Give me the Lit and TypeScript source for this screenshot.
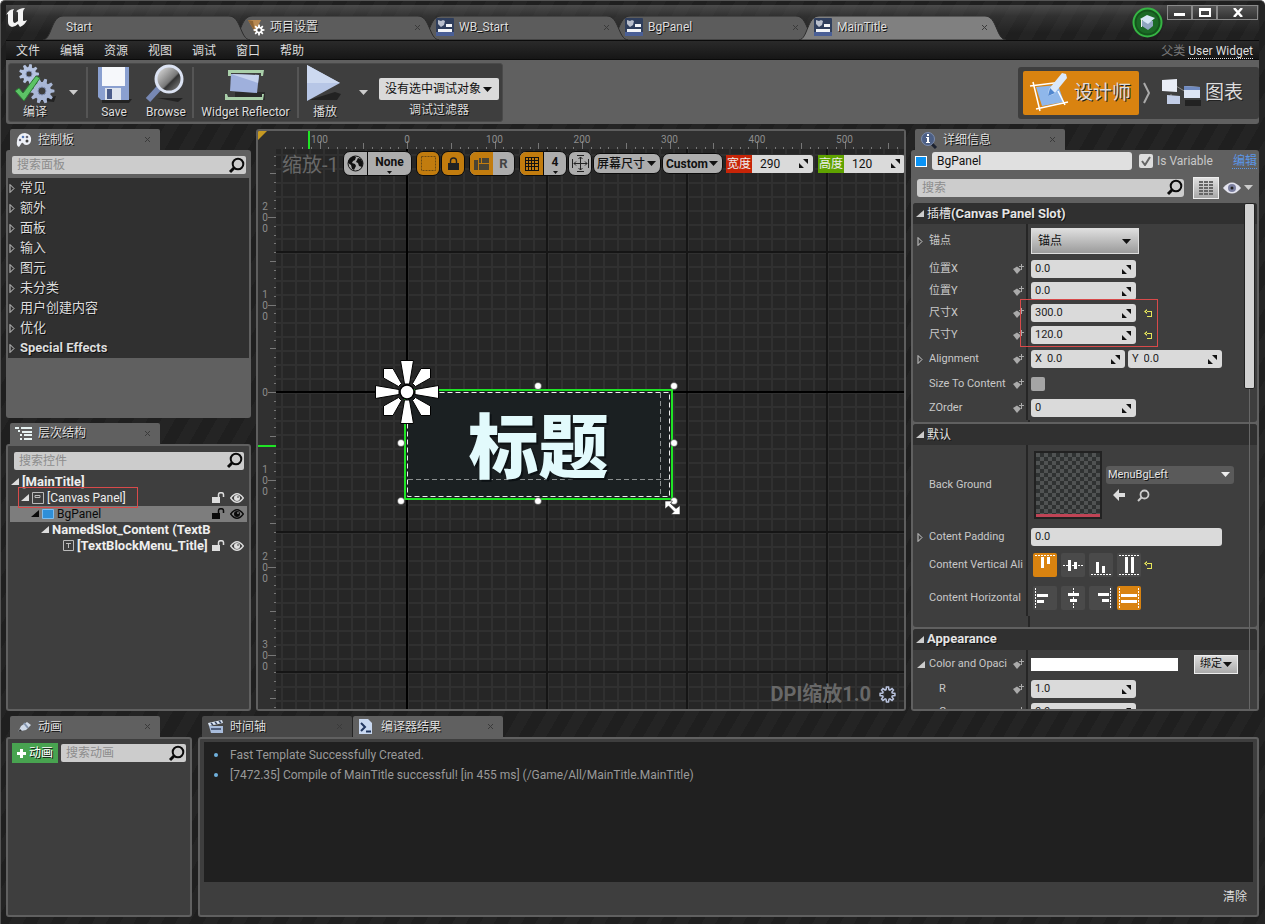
import { LitElement, html, svg, css, nothing } from "lit";
import { customElement, state } from "lit/decorators.js";
import { classMap } from "lit/directives/class-map.js";

const dragGlyph = html`<svg class="drag" width="9" height="9" viewBox="0 0 9 9" aria-hidden="true"><path d="M4 0h5v5zM0 4v5h5z" fill="#111"/></svg>`;
const lens = html`<svg width="18" height="17" viewBox="0 0 18 17" aria-hidden="true"><circle cx="10" cy="7" r="5.3" fill="none" stroke="#0a0a0a" stroke-width="2"/><path d="M6.2 10.8 2 15" stroke="#0a0a0a" stroke-width="3"/></svg>`;
const cross = html`<svg width="7" height="7" viewBox="0 0 7 7" aria-hidden="true"><path d="M1 1l5 5M6 1L1 6" stroke="#3a3a3a"/></svg>`;
const caret = html`<svg width="9" height="5" viewBox="0 0 9 5" aria-hidden="true"><path d="M0 0h9L4.500 5z" fill="#ccc"/></svg>`;
const closedArrow = html`<svg width="6" height="9" viewBox="0 0 6 9" aria-hidden="true"><path d="M1 .5v8l4-4z" fill="none" stroke="#ccc"/></svg>`;
const openArrow = (c: string) => html`<svg width="8" height="7" viewBox="0 0 8 7" aria-hidden="true"><path d="M8 0v7H0z" fill=${c}/></svg>`;
const bindIcon = html`<svg width="12" height="10" viewBox="0 0 12 10" aria-hidden="true"><path d="M1 5l4-2.500 4 3L5 10z" fill="#aaa"/><path d="M9.500 0v6M7 2.500h5" stroke="#aaa"/></svg>`;
const resetIcon = html`<svg width="9" height="8" viewBox="0 0 9 8" aria-hidden="true"><path d="M3 0L0 2.500 3 5zM2 2h6v6H3V7h4V3H2z" fill="#e6e45a"/></svg>`;
const widgetIcon = html`<svg width="18" height="18" viewBox="0 0 18 18" aria-hidden="true"><rect width="18" height="18" rx="1" fill="#2f3e5c"/><path d="M0 14h18v4H0z" fill="#4a5f96"/><path d="M2 2l3 1 2-1 2 1-1 4-3 2-3-3z" fill="#b9bfcc"/><path d="M10 6h6v3h-6zM2 11h14v3H2z" fill="#f3f5f8"/></svg>`;
const lockIcon = (c: string) => html`<svg width="13" height="11" viewBox="0 0 13 11" aria-hidden="true"><rect y="5" width="8" height="6" fill=${c}/><path d="M6.500 5V2.500C6.500 0 11.500 0 11.500 2.500V5" fill="none" stroke=${c} stroke-width="1.500"/></svg>`;
const eyeIcon = (c: string) => html`<svg width="14" height="10" viewBox="0 0 14 10" aria-hidden="true"><path d="M.7 5Q7-3.500 13.300 5 7 13.500.7 5z" fill="none" stroke=${c} stroke-width="1.300"/><circle cx="7" cy="5" r="3" fill=${c}/><circle cx="8" cy="4" r="1" fill="#777"/></svg>`;

/* A gear outline with n teeth, centred on cx,cy. */
function gearPath(cx: number, cy: number, r: number, n: number, tooth: number): string {
  const pts: string[] = [];
  for (let i = 0; i < n; i++) {
    const a = (i / n) * Math.PI * 2;
    const s = Math.PI / n;
    for (const [off, rad] of [[-0.75, r], [-0.35, r + tooth], [0.35, r + tooth], [0.75, r]]) {
      pts.push(`${(cx + Math.cos(a + off * s) * rad).toFixed(2)} ${(cy + Math.sin(a + off * s) * rad).toFixed(2)}`);
    }
  }
  return `M${pts.join("L")}z`;
}

const base = css`
  * { box-sizing: border-box; }
  svg { display: block; flex: none; }
  button, input, select { font: inherit; color: inherit; margin: 0; border: 0; background: none; padding: 0; min-width: 0; }
  button { cursor: pointer; }
  select { appearance: none; }
  a { color: inherit; }
`;

const ORIGIN_X = 149;
const ORIGIN_Y = 261;
const RULER = 18;
const UNIT = 87.5;

@customElement("design-surface")
export class DesignSurface extends LitElement {
  static styles = [base, css`
    :host { display: block; position: relative; flex: 1; min-width: 0; overflow: hidden; border: 2px solid #5e5e5e; border-radius: 3px; background: #262626; }
    .grid { position: absolute; inset: 0; width: 100%; height: 100%; }
    .num { font: 10px Roboto, "Liberation Sans", sans-serif; fill: #8c8c8c; text-anchor: middle; }
    .zoom, .dpi { position: absolute; color: #686868; font: 20px/24px Roboto, "Noto Sans CJK SC", sans-serif; white-space: nowrap; }
    .zoom { left: 24px; top: 22px; }
    .dpi { right: 8px; bottom: 3px; display: flex; align-items: center; gap: 8px; font-weight: 700; }
    .caption { position: absolute; left: 149px; top: 261px; width: 263px; height: 101px; display: flex; justify-content: center; align-items: center; font: 900 70px/101px "Noto Sans CJK SC", sans-serif; color: #e2fafc; text-shadow: 2px 2px 0 #0c1114; }
    .tools { position: absolute; left: 85px; top: 20px; display: flex; align-items: center; gap: 1px; color: #111; font: 700 12px/16px Roboto, "Noto Sans CJK SC", sans-serif; white-space: nowrap; }
    .group { display: flex; flex: none; border: 1px solid #0c0c0c; border-radius: 7px; overflow: hidden; height: 25px; background: #adadad; }
    .group.low { height: 21px; }
    .gap { margin-left: 3px; }
    .group > button { display: flex; flex: none; flex-direction: column; align-items: center; justify-content: center; width: 22px; gap: 1px; }
    .pair > button { width: 23px; }
    .group > button + button { border-left: 1px solid #0c0c0c; }
    .group > .wide { width: 44px; }
    .on { background: #c27c0e; }
    .group > .rtl { width: 21px; color: #444; font-size: 13px; border-left: 0; }
    .pick { position: relative; display: flex; align-items: center; }
    .pick select { height: 19px; padding: 0 14px 0 3px; border-radius: 6px; font-weight: 500; }
    .pick.bold select { font-weight: 700; }
    .pick svg { position: absolute; right: 4px; pointer-events: none; }
    .dim { display: flex; flex: none; align-items: center; height: 18px; margin-left: 2px; color: #eee; font-weight: 400; }
    .dim.h { margin-left: 4px; }
    .dim label { height: 18px; padding: 0 1px; line-height: 18px; background: #c72407; }
    .dim.h label { background: #5fa300; }
    .box { display: flex; align-items: center; width: 61px; height: 18px; padding: 0 5px 0 8px; background: #dadada; color: #111; border-radius: 0 3px 3px 0; }
    .box input { flex: 1; width: 0; }
  `];

  @state() private w = 646;
  @state() private h = 578;

  private watcher = new ResizeObserver(([e]) => {
    this.w = e.contentRect.width;
    this.h = e.contentRect.height;
  });

  connectedCallback() {
    super.connectedCallback();
    this.watcher.observe(this);
  }

  disconnectedCallback() {
    this.watcher.disconnect();
    super.disconnectedCallback();
  }

  private ticks() {
    const out = [];
    const tick = (i: number) => (i % 10 === 0 ? 8 : i % 5 === 0 ? 6 : 2);
    for (let i = -14; ORIGIN_X + (i * UNIT) / 10 < this.w; i++) {
      const x = Math.round(ORIGIN_X + (i * UNIT) / 10) + 0.5;
      out.push(svg`<path d="M${x} ${RULER - tick(i)}V${RULER}" stroke="#777"/>`);
    }
    for (let i = -27; ORIGIN_Y + (i * UNIT) / 10 < this.h; i++) {
      const y = Math.round(ORIGIN_Y + (i * UNIT) / 10) + 0.5;
      out.push(svg`<path d="M${RULER - tick(i)} ${y}H${RULER}" stroke="#777"/>`);
    }
    for (let i = -1; ORIGIN_X + i * UNIT + 12 < this.w; i++) {
      out.push(svg`<text class="num" x=${ORIGIN_X + i * UNIT} y="12">${Math.abs(i * 100)}</text>`);
    }
    for (let i = -2; ORIGIN_Y + i * UNIT + 18 < this.h; i++) {
      const chars = String(Math.abs(i * 100)).split("");
      chars.forEach((c, k) => out.push(svg`<text class="num" x="7" y=${ORIGIN_Y + 4 + i * UNIT + (k - (chars.length - 1) / 2) * 11}>${c}</text>`));
    }
    return out;
  }

  render() {
    const knobs = [[280, 255], [416, 255], [143, 312], [416, 312], [143, 370], [280, 370], [416, 370]];
    return html`
      <svg class="grid" aria-hidden="true">
        <defs>
          <pattern id="minor" x=${ORIGIN_X} y=${ORIGIN_Y} width="14" height="14" patternUnits="userSpaceOnUse"><path d="M0 0h14v2H2v12H0z" fill="#303030"/></pattern>
          <pattern id="major" x=${ORIGIN_X - 1} y=${ORIGIN_Y - 1} width="140" height="140" patternUnits="userSpaceOnUse"><path d="M0 0h140v2H2v138H0z" fill="#151515"/></pattern>
        </defs>
        <rect width="100%" height="100%" fill="#262626"/>
        <rect width="100%" height="100%" fill="url(#minor)"/>
        <rect width="100%" height="100%" fill="url(#major)"/>
        <path d="M148 0h2v4000h-2zM0 260h4000v2H0z" fill="#000"/>
        <rect width="100%" height=${RULER} fill="#303030"/>
        <rect width=${RULER} height="100%" fill="#303030"/>
        ${this.ticks()}
        <path d="M51 0V18M0 315H18" stroke="#1fe425" stroke-width="2"/>
        <path d="M0 0h9L0 9z" fill="#c79a22"/>
        <rect x="147" y="259" width="267" height="109" fill="#1b2022" stroke="#1fe425" stroke-width="2"/>
        <g fill="none" stroke-dasharray="5 3">
          <rect x="149.500" y="261.500" width="262" height="104" stroke="#eee"/>
          <path d="M402.500 262v103M150 348.500h262" stroke="#8b8f90"/>
        </g>
        ${knobs.map(([x, y]) => svg`<circle cx=${x} cy=${y} r="3.500" fill="#fff" stroke="#222" stroke-width=".5"/>`)}
        <g transform="translate(149 261)" fill="#fff" stroke="#000">
          ${[0, 90, 180, 270].map((a) => svg`<g transform="rotate(${a})"><path d="M-2.500-8L-6.500-31.500H6.500L2.500-8z"/><path d="M5.500-8.500L14-23.500H23.500V-14L8.500-5.500z"/></g>`)}
          <circle r="7" stroke-width="1.500"/>
        </g>
        <path d="M407 370h7.500l-2 2.500 5.500 5 4-3v9h-9l3-3-5.500-5.500-3.500 3z" fill="#fff" stroke="#222" stroke-width=".6"/>
      </svg>
      <div class="caption">标题</div>
      <div class="zoom">缩放-1</div>
      <div class="tools">
        <div class="group pair">
          <button aria-label="Localization"><svg width="17" height="17" viewBox="0 0 17 17"><circle cx="8.500" cy="8.500" r="7.500" fill="none" stroke="#111"/><path d="M3 3l4-2 2 1-1 3-2 1-1 2 3 1 1 2-2 4-2-1-1-4-3-2V6zM11 3l3 1 2 4-1 4-3-1-1-3-2-1 1-2z" fill="#111"/></svg></button>
          <button class="wide">None<svg width="5" height="3" viewBox="0 0 5 3"><path d="M0 0h5L2.500 3z" fill="#111"/></svg></button>
        </div>
        <div class="group gap"><button class="on" aria-label="Outline"><svg width="17" height="17" viewBox="0 0 17 17"><path d="M1.500 1.500h14v14h-14z" fill="none" stroke="#6d4a12" stroke-dasharray="2 1"/></svg></button></div>
        <div class="group"><button class="on" aria-label="Lock"><svg width="11" height="13" viewBox="0 0 11 13"><path d="M0 6h11v7H0z" fill="#222"/><path d="M2.500 6V4C2.500 0 8.500 0 8.500 4v2" fill="none" stroke="#222" stroke-width="1.400"/></svg></button></div>
        <div class="group pair gap">
          <button class="on" aria-label="Flow"><svg width="15" height="12" viewBox="0 0 15 12"><path d="M0 2h4v10H0zM5 0h2v5H5zM8 0h7v5H8zM5 6h10v6H5z" fill="#4a4435"/></svg></button>
          <button class="rtl">R</button>
        </div>
        <div class="group pair gap">
          <button class="on" aria-label="Grid snap"><svg width="14" height="14" viewBox="0 0 14 14"><path d="M.5 0v14M3.500 0v14M6.500 0v14M9.500 0v14M13.500 0v14M0 .5h14M0 3.500h14M0 6.500h14M0 9.500h14M0 13.500h14" stroke="#111"/></svg></button>
          <button>4<svg width="5" height="3" viewBox="0 0 5 3"><path d="M0 0h5L2.500 3z" fill="#111"/></svg></button>
        </div>
        <div class="group"><button aria-label="Zoom to fit"><svg width="17" height="17" viewBox="0 0 17 17" fill="none" stroke="#222"><path d="M.5 4v9M16.500 4v9M5 .5h7M5 16.500h7M2 8.500h13M8.500 2v13M4 6.500l-2 2 2 2M13 6.500l2 2-2 2M6.500 4l2-2 2 2M6.500 13l2 2 2-2"/></svg></button></div>
        <div class="group low pick"><select aria-label="屏幕尺寸"><option>屏幕尺寸</option></select><svg width="9" height="5" viewBox="0 0 9 5"><path d="M0 0h9L4.500 5z" fill="#111"/></svg></div>
        <div class="group low pick bold"><select aria-label="Size rule"><option>Custom</option></select><svg width="9" height="5" viewBox="0 0 9 5"><path d="M0 0h9L4.500 5z" fill="#111"/></svg></div>
        <div class="dim"><label for="w">宽度</label><span class="box"><input id="w" value="290" size="3">${dragGlyph}</span></div>
        <div class="dim h"><label for="h">高度</label><span class="box"><input id="h" value="120" size="3">${dragGlyph}</span></div>
      </div>
      <div class="dpi">DPI缩放1.0<svg width="17" height="17" viewBox="0 0 17 17"><path d=${gearPath(8.5, 8.5, 5, 8, 2.5)} fill="none" stroke="#b9c3de" stroke-width="1.500"/></svg></div>
    `;
  }
}

type RowOpts = { arrow?: unknown; bind?: boolean; cls?: string; forId?: string; indent?: boolean };

@customElement("details-panel")
export class DetailsPanel extends LitElement {
  static styles = [base, css`
    :host { display: flex; flex-direction: column; flex: 1; min-height: 0; background: #606060; border-radius: 3px; padding: 1px 2px 2px; overflow: hidden; color: #c8c8c8; font: 11px/16px Roboto, "Noto Sans CJK SC", sans-serif; }
    .name { display: flex; align-items: center; gap: 5px; height: 20px; padding-left: 2px; font-size: 12px; }
    .swatch { width: 12px; height: 11px; border: 1px solid #fff; background: #0a93f5; }
    .name > input { width: 200px; height: 18px; padding: 0 5px; border-radius: 3px; background: #e0e0e0; color: #111; }
    .check { display: flex; align-items: center; gap: 4px; margin-left: 2px; white-space: nowrap; }
    .check input, .tick { appearance: none; width: 14px; height: 14px; border-radius: 2px; background: #a5a5a5; }
    .check input { background: #ddd; }
    .check span { position: relative; display: flex; }
    .check svg { position: absolute; left: 2px; top: 2px; pointer-events: none; }
    .edit { margin-left: auto; color: #5b96e6; text-decoration: underline dotted; white-space: nowrap; text-underline-offset: 3px; }
    .find { display: flex; align-items: center; height: 32px; padding: 1px 4px 0; gap: 9px; }
    .search { display: flex; align-items: center; flex: 1; height: 18px; padding-left: 5px; background: #ccc; border-radius: 3px; font-size: 12px; }
    .search input { flex: 1; color: #111; }
    .search input::placeholder { color: #8d8d8d; opacity: 1; }
    .matrix { display: flex; align-items: center; justify-content: center; width: 26px; height: 22px; background: linear-gradient(#e0e0e0, #a8a8a8); border: 1px solid #eee; }
    .view { display: flex; align-items: center; gap: 3px; margin-left: -5px; }
    .scroll { position: relative; flex: 1; min-height: 0; overflow: hidden; }
    .thumb { position: absolute; right: 2px; top: 0; width: 11px; height: 186px; background: #d2d2d2; border: 1px solid #222; border-radius: 2px; }
    .track { position: absolute; right: 7px; top: 186px; bottom: 0; width: 1px; background: #666; }
    .cat { background: #3e3e3e; border-radius: 3px; margin-bottom: 2px; overflow: hidden; }
    .cat h3 { display: flex; align-items: center; gap: 3px; margin: 0; height: 21px; padding: 0 0 1px 3px; background: #303030; color: #e4e4e4; font: 700 13px/16px Roboto, "Noto Sans CJK SC", sans-serif; text-shadow: 1px 1px 0 #111; }
    .cat h3.cjk { font: 400 12px/16px "Noto Sans CJK SC", sans-serif; }
    .cat h3 b { font: 700 13px/16px Roboto, sans-serif; }
    .row { display: flex; height: 22px; }
    .r24 { height: 24px; }
    .r26 { height: 26px; }
    .r28 { height: 28px; }
    .r30 { height: 30px; }
    .r34 { height: 34px; }
    .r36 { height: 36px; }
    .r78 { height: 79px; }
    .lab { display: flex; align-items: center; width: 115px; padding: 0 2px 0 4px; border-right: 2px solid #262626; white-space: nowrap; }
    .arr { width: 12px; }
    .lab label, .lab .txt { flex: 1; min-width: 0; overflow: hidden; }
    .ind .arr { width: 22px; }
    .val { display: flex; align-items: center; flex: 1; padding-left: 3px; gap: 3px; }
    .spin { display: flex; align-items: center; width: 105px; height: 18px; padding: 0 5px 0 4px; gap: 5px; border-radius: 3px; background: #dadada; color: #222; }
    .spin input { flex: 1; }
    .spin.s { width: 94px; }
    .spin.l { width: 191px; }
    .reset { margin-left: 5px; }
    .sizes { position: relative; }
    .mark { position: absolute; left: 107px; top: -3px; width: 138px; height: 48px; border: 1px solid #d84a4a; }
    .anchor { position: relative; display: flex; align-items: center; width: 108px; height: 26px; background: linear-gradient(#dedede, #9b9b9b); border: 1px solid #ddd; color: #111; font-size: 12px; }
    .anchor select { flex: 1; height: 24px; padding: 0 6px; }
    .anchor svg { position: absolute; right: 7px; pointer-events: none; }
    .thumbnail { width: 68px; height: 68px; margin-left: 3px; border: 2px solid #222; background: linear-gradient(#c04455, #c04455) bottom / 100% 3px no-repeat, repeating-conic-gradient(#2f3232 0 25%, #505353 0 50%) 0 0 / 8px 8px; }
    .asset { display: flex; flex-direction: column; gap: 5px; padding-bottom: 2px; }
    .combo { position: relative; display: flex; align-items: center; width: 128px; height: 18px; margin-left: 1px; background: #5a5a5a; border-radius: 3px; color: #e4e4e4; text-shadow: 1px 1px 0 #111; }
    .combo select { flex: 1; padding-left: 2px; height: 18px; text-shadow: inherit; }
    .combo svg { position: absolute; right: 4px; pointer-events: none; }
    .acts { display: flex; gap: 12px; padding-left: 8px; }
    .aligns { display: flex; align-items: center; gap: 4px; padding-left: 2px; }
    .al { display: flex; align-items: center; justify-content: center; width: 24px; height: 24px; background: #4a4a4a; border-radius: 2px; }
    .al.on { background: #d98310; }
    .aligns ~ .reset { margin-left: 0; }
    .white { width: 147px; height: 13px; background: #fff; }
    .bindb { display: flex; align-items: center; gap: 1px; height: 19px; margin-left: 13px; padding: 0 5px; background: linear-gradient(#ddd, #aaa); border: 1px solid #eee; color: #111; white-space: nowrap; }
    .foot { height: 11px; display: flex; }
    .foot::before { content: ""; width: 115px; border-right: 2px solid #262626; }
    .foot.one { height: 2px; }
  `];

  private row(label: string, body: unknown, o: RowOpts = {}) {
    return html`<div class="row ${o.cls ?? ""} ${o.indent ? "ind" : ""}">
      <div class="lab"><span class="arr">${o.arrow ?? nothing}</span>${o.forId ? html`<label for=${o.forId}>${label}</label>` : html`<span class="txt">${label}</span>`}${o.bind ? bindIcon : nothing}</div>
      <div class="val">${body}</div></div>`;
  }

  private spin(id: string, value: string, cls = "", prefix = "", drag = true) {
    return html`<span class="spin ${cls}">${prefix ? html`<span>${prefix}</span>` : nothing}<input id=${id} aria-label=${id} .value=${value}>${drag ? dragGlyph : nothing}</span>`;
  }

  /* Four alignment buttons; the picture is drawn for the vertical axis and turned for the horizontal. */
  private aligns(active: number, horizontal: boolean) {
    const art = [
      svg`<path d="M1 1.500h20" stroke-dasharray="2 1"/><path d="M7 3h3v11H7zM13 3h3v7h-3z" fill="#fff" stroke="none"/>`,
      svg`<path d="M1 11.500h20" stroke-dasharray="2 1"/><path d="M6 6h3v11H6zM12 8h3v7h-3z" fill="#fff" stroke="none"/>`,
      svg`<path d="M1 20.500h20" stroke-dasharray="2 1"/><path d="M6 8h3v11H6zM12 12h3v7h-3z" fill="#fff" stroke="none"/>`,
      svg`<path d="M1 1.500h20M1 20.500h20" stroke-dasharray="2 1"/><path d="M7 3h3v16H7zM13 3h3v16h-3z" fill="#fff" stroke="none"/>`,
    ];
    return html`<span class="aligns">${art.map((a, i) => html`<button class="al ${i === active ? "on" : ""}" aria-label="Align ${i + 1}"><svg width="22" height="22" viewBox="0 0 22 22"><g stroke="#fff" fill="none" transform=${horizontal ? "matrix(0 1 1 0 0 0)" : "translate(0 0)"}>${a}</g></svg></button>`)}</span>`;
  }

  render() {
    const open = openArrow("#ccc");
    return html`
      <div class="name">
        <span class="swatch"></span>
        <input aria-label="Name" value="BgPanel">
        <label class="check"><span><input type="checkbox" checked><svg width="10" height="10" viewBox="0 0 10 10"><path d="M1 5l3 4 5-8" fill="none" stroke="#666" stroke-width="2"/></svg></span>Is Variable</label>
        <a class="edit" href="#edit">编辑</a>
      </div>
      <div class="find">
        <span class="search"><input aria-label="搜索" placeholder="搜索">${lens}</span>
        <button class="matrix" aria-label="Property matrix"><svg width="14" height="14" viewBox="0 0 14 14"><path d="M0 1h14M0 4h14M0 7h14M0 10h14M0 13h14" stroke="#666" stroke-width="2" stroke-dasharray="4 1"/></svg></button>
        <button class="view" aria-label="View options"><svg width="18" height="12" viewBox="0 0 18 12"><path d="M0 6Q9-5 18 6 9 17 0 6z" fill="#e3e3ee"/><circle cx="9" cy="6" r="4" fill="#7b7fa0"/><circle cx="9" cy="6" r="1.500" fill="#222"/></svg>${caret}</button>
      </div>
      <div class="scroll">
        <section class="cat">
          <h3 class="cjk">${open}<span>插槽<b>(Canvas Panel Slot)</b></span></h3>
          ${this.row("锚点", html`<span class="anchor"><select id="anchor"><option>锚点</option></select><svg width="9" height="5" viewBox="0 0 9 5"><path d="M0 0h9L4.500 5z" fill="#111"/></svg></span>`, { arrow: closedArrow, cls: "r34", forId: "anchor" })}
          ${this.row("位置X", this.spin("posx", "0.0"), { bind: true, forId: "posx" })}
          ${this.row("位置Y", this.spin("posy", "0.0"), { bind: true, forId: "posy" })}
          <div class="sizes">
            ${this.row("尺寸X", html`${this.spin("sizex", "300.0")}<span class="reset">${resetIcon}</span>`, { bind: true, forId: "sizex" })}
            ${this.row("尺寸Y", html`${this.spin("sizey", "120.0")}<span class="reset">${resetIcon}</span>`, { bind: true, forId: "sizey" })}
            <div class="mark"></div>
          </div>
          ${this.row("Alignment", html`${this.spin("alx", "0.0", "s", "X")}${this.spin("aly", "0.0", "s", "Y")}`, { arrow: closedArrow, bind: true, cls: "r26", forId: "alx" })}
          ${this.row("Size To Content", html`<input class="tick" id="stc" type="checkbox">`, { bind: true, cls: "r24", forId: "stc" })}
          ${this.row("ZOrder", this.spin("z", "0"), { bind: true, cls: "r24", forId: "z" })}
          <div class="foot one"></div>
        </section>
        <section class="cat">
          <h3 class="cjk">${open}<span>默认</span></h3>
          ${this.row("Back Ground", html`<div class="thumbnail"></div><div class="asset">
            <span class="combo"><select id="bg"><option>MenuBgLeft</option></select><svg width="9" height="5" viewBox="0 0 9 5"><path d="M0 0h9L4.500 5z" fill="#eee"/></svg></span>
            <span class="acts"><button aria-label="Use selected"><svg width="12" height="12" viewBox="0 0 12 12"><path d="M6 0v4h6v4H6v4L0 6z" fill="#ddd"/></svg></button><button aria-label="Browse"><svg width="13" height="13" viewBox="0 0 13 13"><circle cx="7.500" cy="5.500" r="4" fill="none" stroke="#ccc" stroke-width="1.800"/><path d="M4.500 8.500L1 12" stroke="#ccc" stroke-width="2"/></svg></button></span></div>`, { cls: "r78", forId: "bg" })}
          ${this.row("Cotent Padding", this.spin("pad", "0.0", "l", "", false), { arrow: closedArrow, cls: "r26", forId: "pad" })}
          ${this.row("Content Vertical Ali", html`${this.aligns(0, false)}<span class="reset">${resetIcon}</span>`, { cls: "r30" })}
          ${this.row("Content Horizontal", this.aligns(3, true), { cls: "r36" })}
          <div class="foot"></div>
        </section>
        <section class="cat">
          <h3>${open}<span>Appearance</span></h3>
          ${this.row("Color and Opaci", html`<span class="white"></span><button class="bindb">绑定<svg width="9" height="5" viewBox="0 0 9 5"><path d="M0 0h9L4.500 5z" fill="#111"/></svg></button>`, { arrow: open, bind: true, cls: "r28" })}
          ${this.row("R", this.spin("r", "1.0"), { bind: true, indent: true, forId: "r" })}
          ${this.row("G", this.spin("g", "0.0"), { bind: true, indent: true, cls: "r24", forId: "g" })}
        </section>
        <div class="track"></div><div class="thumb"></div>
      </div>`;
  }
}

@customElement("app-root")
export class AppRoot extends LitElement {
  static styles = [base, css`
    :host { display: block; color: #ddd; font: 12px/16px Roboto, "Noto Sans CJK SC", sans-serif; }
    .win { display: flex; flex-direction: column; height: 100vh; min-height: 700px; padding: 4px 6px 7px 5px; border: solid #555; border-width: 1px 0 0 1px; border-radius: 5px 5px 0 0; background: repeating-linear-gradient(120deg, #1f1f1f 0 12px, #242424 12px 24px); }
    .title { display: flex; height: 35px; background: linear-gradient(#606060aa, #4a4a4a66 11px, #22222200 28px); }
    .logo { width: 37px; padding: 3px 0 0 0; }
    .tabs { display: flex; flex: 1; min-width: 0; padding-top: 11px; }
    .wt { position: relative; isolation: isolate; display: flex; align-items: center; flex: 0 1 207px; min-width: 0; height: 24px; margin-right: -18px; padding: 0 17px 2px 15px; gap: 5px; text-shadow: 1px 1px 0 #111; }
    .wt > * { position: relative; }
    .wt .shape { position: absolute; left: 0; top: 0; width: 100%; height: 100%; z-index: -1; }
    .wt .pic { width: 18px; }
    .wt.plain .pic { width: 3px; }
    .wt .x { margin-left: auto; margin-right: 1px; }
    .winbtns { display: flex; align-items: flex-start; gap: 4px; }
    .academy { margin-top: 2px; }
    .wb { display: flex; margin-right: 1px; }
    .wb button { display: flex; align-items: center; justify-content: center; width: 25px; height: 15px; border: 1px solid #8a8a8a; background: linear-gradient(#555, #333); }
    .wb button:last-child { width: 41px; }
    .menu { display: flex; align-items: center; height: 20px; padding: 1px 6px 0 10px; background: linear-gradient(#2a2a2a, #161616); border: solid #0b0b0b; border-width: 1px 0; }
    .menu nav { display: flex; gap: 20px; }
    .parent { margin-left: auto; color: #777; }
    .parent a { color: #ddd; text-decoration: underline dotted; text-underline-offset: 3px; }
    .bar { display: flex; align-items: flex-start; justify-content: space-between; min-height: 64px; padding: 3px 0 2px 2px; background: #606060; border-radius: 0 0 3px 3px; }
    .tools { display: flex; height: 59px; background: #3e3e3e; border: 1px solid #4a4a4a; border-radius: 3px; text-shadow: 1px 1px 0 #111; }
    .tb { display: flex; flex-direction: column; align-items: center; justify-content: flex-end; width: 52px; height: 57px; padding-bottom: 1px; text-shadow: inherit; white-space: nowrap; }
    .tb.w { width: 103px; }
    .drop { display: flex; align-items: center; justify-content: center; width: 25px; height: 57px; }
    .sep { width: 2px; margin: 3px 0; background: #555; }
    .filter { display: flex; flex-direction: column; align-items: center; padding: 14px 3px 0 0; margin-left: 3px; gap: 2px; }
    .dd { position: relative; display: flex; align-items: center; width: 120px; height: 22px; background: #dadada; color: #111; border-radius: 2px; text-shadow: none; }
    .dd select { flex: 1; height: 22px; padding: 0 12px 0 6px; }
    .dd svg { position: absolute; right: 7px; pointer-events: none; }
    .modes { display: flex; align-items: center; height: 52px; margin-top: 4px; padding: 0 16px 0 5px; background: #3e3e3e; border-radius: 3px; color: #ddd; font-size: 19px; }
    .mode { display: flex; align-items: center; gap: 4px; height: 44px; white-space: nowrap; line-height: 24px; text-shadow: 1px 1px 0 #222; }
    .mode.on { padding: 0 8px 0 5px; background: #d98310; border-radius: 2px; }
    .chev { margin: 0 10px 0 4px; }
    .main { display: flex; flex: 1; min-height: 0; gap: 5px; padding-top: 5px; }
    .left { display: flex; flex-direction: column; width: 245px; gap: 5px; }
    .right { display: flex; flex-direction: column; width: 348px; }
    .dock { display: flex; flex-direction: column; flex: 1; min-height: 0; }
    .ptabs { display: flex; padding-left: 4px; gap: 1px; }
    .pt { display: flex; align-items: center; width: 150px; height: 21px; padding: 0 9px 0 5px; gap: 5px; background: #606060; border-radius: 2px 2px 0 0; color: #ddd; text-shadow: 1px 1px 0 #111; white-space: nowrap; }
    .pt.off { background: #474747; }
    .pt .ic { width: 18px; }
    .pt .x { margin-left: auto; }
    .palette { flex: 1; padding: 6px 2px 2px; background: #606060; border-radius: 3px; }
    .framed { flex: 1; min-height: 0; border: 2px solid #606060; border-radius: 3px; background: #3e3e3e; }
    .search { display: flex; align-items: center; height: 18px; padding-left: 5px; background: #ccc; border-radius: 2px; }
    .search input { flex: 1; width: 0; color: #111; }
    .search input::placeholder { color: #8d8d8d; opacity: 1; }
    .palette .search { margin: 0 3px 0 4px; }
    .list { list-style: none; margin: 4px 0 0; padding: 0; background: #303030; text-shadow: 1px 1px 0 #111; }
    .list li { display: flex; align-items: center; height: 20px; padding-left: 1px; gap: 5px; font-size: 13px; }
    .list li.b { font-weight: 700; }
    .hier { padding: 6px 2px; }
    .hier .search { margin: 0 3px 4px 4px; }
    .node { position: relative; display: flex; align-items: center; height: 16px; padding-right: 3px; color: #eee; white-space: nowrap; }
    .node .in { display: flex; align-items: center; gap: 3px; flex: 1; min-width: 0; }
    .node.bold { font-weight: 700; font-size: 13px; }
    .node.d0 { padding-left: 1px; }
    .node.d1 { padding-left: 11px; }
    .node.d2 { padding-left: 21px; }
    .node.d3 { padding-left: 31px; }
    .node.d4 { padding-left: 53px; }
    .node.sel { background: #7d7d7d; color: #0a0a0a; }
    .node .end { display: flex; align-items: center; gap: 5px; margin-left: 4px; }
    .node .mark { position: absolute; left: 8px; top: -3px; width: 120px; height: 21px; border: 1px solid #d84a4a; z-index: 1; }
    .bottom { display: flex; flex: 0 0 206px; min-height: 0; padding-top: 5px; gap: 6px; }
    .anim { width: 186px; flex: none; }
    .anim .framed { padding: 4px; }
    .anim .line { display: flex; align-items: center; gap: 3px; }
    .anim .search { flex: 1; min-width: 0; }
    .add { display: flex; align-items: center; gap: 3px; height: 20px; padding: 0 5px; background: #48a350; color: #fff; text-shadow: 1px 1px 0 #111; white-space: nowrap; }
    .results { display: flex; flex-direction: column; padding: 3px 4px; }
    .log { flex: 1; margin: 0; padding: 3px 10px; list-style: none; background: #202020; color: #9a9a9a; line-height: 20px; }
    .log li { display: flex; align-items: center; height: 20px; gap: 12px; }
    .log li::before { content: ""; width: 4px; height: 4px; border-radius: 2px; background: #6fb0dc; }
    .clear { align-self: flex-end; height: 30px; padding: 0 6px; color: #ddd; }
  `];

  private windowTab(name: string, icon: unknown, z: number, active = false) {
    return html`<div class=${classMap({ wt: true, plain: !icon })} style="z-index:${z}">
      <svg class="shape" viewBox="0 0 207 24" preserveAspectRatio="none"><path d="M0 24C9 23 8 0 20 0H186C198 0 197 23 207 24z" fill=${active ? "#808080" : "#5c5c5c"} stroke="#2c2c2c"/></svg>
      <span class="pic">${icon}</span><span>${name}</span>${icon ? html`<button class="x" aria-label="Close">${cross}</button>` : nothing}</div>`;
  }

  private panelTab(name: string, icon: unknown, off = false) {
    return html`<div class="pt ${off ? "off" : ""}"><span class="ic">${icon}</span><span>${name}</span><button class="x" aria-label="Close">${cross}</button></div>`;
  }

  private node(cls: string, icon: unknown, text: string, acts = true, mark = false) {
    const c = cls.includes("sel") ? "#0a0a0a" : "#ddd";
    return html`<div class="node ${cls}"><span class="in">${cls.includes("d4") ? nothing : openArrow(c)}${icon}<span>${text}</span></span>
      ${acts ? html`<span class="end">${lockIcon(c)}${eyeIcon(c)}</span>` : nothing}${mark ? html`<span class="mark"></span>` : nothing}</div>`;
  }

  render() {
    const palette = ["常见", "额外", "面板", "输入", "图元", "未分类", "用户创建内容", "优化", "Special Effects"];
    const dark = html`<svg width="9" height="5" viewBox="0 0 9 5"><path d="M0 0h9L4.500 5z" fill="#111"/></svg>`;
    return html`<div class="win">
      <header class="title">
        <div class="logo"><svg width="22" height="20" viewBox="0 0 22 20"><path d="M0 7Q3 1 8 1L7 3V12Q7 15 9 15L12 13V5Q12 3 10 3.500 13 0 19 0 17 2 17 4V12Q17 14 21 12 19 17 14 19L12 16Q9 19 6 19 2 18 2 14V7Q2 5 0 7z" fill="#f4f4f4"/></svg></div>
        <div class="tabs">
          ${this.windowTab("Start", "", 5)}
          ${this.windowTab("项目设置", html`<svg width="18" height="18" viewBox="0 0 18 18"><path d="M1 2h13l-6 12z" fill="#b98a52"/><path d="M1 2l5 1 2 11z" fill="#8d6434"/><path d=${gearPath(12, 12, 3.5, 8, 2)} fill="#fff"/><circle cx="12" cy="12" r="1.700" fill="#444"/></svg>`, 4)}
          ${this.windowTab("WB_Start", widgetIcon, 3)}
          ${this.windowTab("BgPanel", widgetIcon, 2)}
          ${this.windowTab("MainTitle", widgetIcon, 6, true)}
        </div>
        <div class="winbtns">
          <svg class="academy" width="31" height="31" viewBox="0 0 31 31"><circle cx="15.500" cy="15.500" r="14" fill="#14541c" stroke="#36b544" stroke-width="2"/><circle cx="15.500" cy="15.500" r="11" fill="#1b6a26"/><path d="M10 14v5l6 4 5-4v-5" fill="#8fa6c0"/><path d="M8 12l7-4 8 3-7 6z" fill="#d6e6f5"/><path d="M9.500 12v8" stroke="#eee"/></svg>
          <div class="wb">
            <button aria-label="Minimize"><svg width="11" height="9" viewBox="0 0 11 9"><path d="M0 5h11v3H0z" fill="#fff"/></svg></button>
            <button aria-label="Maximize"><svg width="12" height="9" viewBox="0 0 12 9"><path d="M0 0h12v9H0zM2 3v4h8V3z" fill="#fff" fill-rule="evenodd"/></svg></button>
            <button aria-label="Close window"><svg width="10" height="9" viewBox="0 0 10 9"><path d="M1 0l8 9M9 0L1 9" stroke="#fff" stroke-width="2.500"/></svg></button>
          </div>
        </div>
      </header>
      <div class="menu"><nav>${["文件", "编辑", "资源", "视图", "调试", "窗口", "帮助"].map((m) => html`<button>${m}</button>`)}</nav><span class="parent">父类 <a href="#parent">User Widget</a></span></div>
      <div class="bar">
        <div class="tools">
          <button class="tb"><svg width="42" height="40" viewBox="0 0 42 40"><path d="M22 36l18 2 2-6z" fill="#222"/><path d=${gearPath(15, 10, 7, 9, 3)} fill="#b5c3e0"/><circle cx="15" cy="10" r="3" fill="#3e3e3e" stroke="#8291b5"/><path d=${gearPath(28, 27, 9, 10, 3.5)} fill="#a9b7d6"/><circle cx="28" cy="27" r="4" fill="#3e3e3e" stroke="#8291b5"/><path d="M1 27l4-3 4 5L22 12l4 2L10 37z" fill="#5cc366" stroke="#2c7a34"/></svg>编译</button>
          <button class="drop" aria-label="编译选项">${caret}</button>
          <i class="sep"></i>
          <button class="tb"><svg width="36" height="40" viewBox="0 0 36 40"><path d="M6 35h30l-3 4H6z" fill="#222"/><path d="M2 3h31v33H5l-3-3z" fill="#8aa0d0"/><path d="M6 3h23v19H6z" fill="#f6f8fb"/><path d="M9 24h16v12H9z" fill="#dfe5ee"/><path d="M11 25h5v10h-5z" fill="#4a5c8a"/></svg>Save</button>
          <button class="tb"><svg width="42" height="40" viewBox="0 0 42 40"><path d="M12 34h26l-5 4z" fill="#222"/><path d="M3 36l11-12" stroke="#7788b4" stroke-width="6"/><defs><linearGradient id="gl" x2="1" y2="1"><stop stop-color="#eee"/><stop offset=".55" stop-color="#777"/><stop offset=".6" stop-color="#333"/><stop offset="1" stop-color="#999"/></linearGradient></defs><circle cx="24" cy="15" r="13" fill="url(#gl)" stroke="#dbe2f2" stroke-width="3"/></svg>Browse</button>
          <i class="sep"></i>
          <button class="tb w"><svg width="42" height="38" viewBox="0 0 42 38"><path d="M10 26h30v8H10z" fill="#2a2a2a"/><path d="M3 4h36l-1 6h-2V7H6v3H3zM0 28h2l1 3h34v-3h2l-1 6H0z" fill="#a9cfa9"/><path d="M6 8l28 1-2 18-27-2z" fill="#9fb0dc"/><path d="M6 8l28 1-1 8z" fill="#c6d2ee"/></svg>Widget Reflector</button>
          <i class="sep"></i>
          <button class="tb"><svg width="42" height="40" viewBox="0 0 42 40"><path d="M5 36h28l4-6-6-2z" fill="#222"/><path d="M3 1l33 18L3 37z" fill="#b7c6e6"/><path d="M3 1l33 18H3z" fill="#cdd9f0"/></svg>播放</button>
          <button class="drop" aria-label="播放选项">${caret}</button>
          <div class="filter"><span class="dd"><select id="dbg"><option>没有选中调试对象</option></select>${dark}</span><label for="dbg">调试过滤器</label></div>
        </div>
        <div class="modes">
          <button class="mode on"><svg width="42" height="40" viewBox="0 0 42 40"><path d="M8 14l22-2 6 17-22 4z" fill="#8fb7ea"/><path d="M2 13l32-4M5 9l7 29M8 36l32-7M30 18l7 14" stroke="#fff" stroke-width="1.500"/><path d="M34 0l4 1 1 4-13 16-6 2 1-7z" fill="#dbe9fb"/><path d="M22 15l-2 8 7-3z" fill="#4f86cf"/></svg>设计师</button>
          <svg class="chev" width="8" height="22" viewBox="0 0 8 22"><path d="M1 1l5 10-5 10" fill="none" stroke="#aaa" stroke-width="2"/></svg>
          <button class="mode"><svg width="40" height="30" viewBox="0 0 40 30"><path d="M24 22h16v6H24z" fill="#222"/><path d="M15 8l10 6M10 16v6" stroke="#888"/><path d="M1 2l15-1v13L1 13z" fill="#e9edf6"/><path d="M23 8l16 1v11H23z" fill="#dde5f4"/><path d="M23 8l16 1v3H23z" fill="#6f8ac0"/><path d="M6 17l13 1v8H6z" fill="#c2cde6"/></svg>图表</button>
        </div>
      </div>
      <div class="main">
        <div class="left">
          <div class="dock">
            <div class="ptabs">${this.panelTab("控制板", html`<svg width="18" height="16" viewBox="0 0 18 16"><path d="M2 9Q3 1 10 1q7 1 6 8-1 4-5 4-2 0-3-2-1-1-2 1l-2 3Q1 14 2 9z" fill="#eef1f7"/><circle cx="8" cy="5" r="1.300" fill="#5577b5"/><circle cx="12" cy="5" r="1.300" fill="#667"/><circle cx="12" cy="9" r="1.500" fill="#444"/><circle cx="5" cy="8" r="1.200" fill="#667"/></svg>`)}</div>
            <div class="palette">
              <div class="search"><input aria-label="搜索面板" placeholder="搜索面板">${lens}</div>
              <ul class="list">${palette.map((p) => html`<li class=${p === "Special Effects" ? "b" : ""}>${closedArrow}<span>${p}</span></li>`)}</ul>
            </div>
          </div>
          <div class="dock">
            <div class="ptabs">${this.panelTab("层次结构", html`<svg width="18" height="14" viewBox="0 0 18 14"><path d="M0 1h4v2H0zM6 1h11v2H6zM3 4h2v2H3zM7 5h10v2H7zM5 8h2v2H5zM9 8h8v2H9zM5 12h2v2H5zM9 12h8v2H9z" fill="#e8f4f4"/></svg>`)}</div>
            <div class="framed hier">
              <div class="search"><input aria-label="搜索控件" placeholder="搜索控件">${lens}</div>
              ${this.node("d0 bold", nothing, "[MainTitle]", false)}
              ${this.node("d1", html`<svg width="12" height="12" viewBox="0 0 12 12"><path d="M.5.5h11v11H.5zM3 3.500h5v2H3z" fill="none" stroke="#bbb"/></svg>`, "[Canvas Panel]", true, true)}
              ${this.node("d2 sel", html`<svg width="12" height="10" viewBox="0 0 12 10"><path d="M.5.500h11v9H.5z" fill="#2f8fd8" stroke="#7dbdf0"/></svg>`, "BgPanel")}
              ${this.node("d3 bold", nothing, "NamedSlot_Content (TextB", false)}
              ${this.node("d4 bold", html`<svg width="11" height="11" viewBox="0 0 11 11"><path d="M.5.500h10v10H.5zM3 3.500h5M5.500 3v5" fill="none" stroke="#bbb"/></svg>`, "[TextBlockMenu_Title]")}
            </div>
          </div>
        </div>
        <design-surface></design-surface>
        <div class="right">
          <div class="ptabs">${this.panelTab("详细信息", html`<svg width="18" height="18" viewBox="0 0 18 18"><path d="M11 12l5 5" stroke="#1c2230" stroke-width="3"/><circle cx="8" cy="8" r="6.500" fill="#4c5f85" stroke="#7b8cae"/><path d="M7 3h2v2H7zM6 6h3v5h1v1H6v-1h1V7H6z" fill="#fff"/></svg>`)}</div>
          <details-panel></details-panel>
        </div>
      </div>
      <div class="bottom">
        <div class="dock anim">
          <div class="ptabs">${this.panelTab("动画", html`<svg width="18" height="14" viewBox="0 0 18 14"><path d="M3 12l3-6 6-4 4 3-5 5-5 1z" fill="#cfd9e8"/><path d="M9 3l4 5" stroke="#8293ad" stroke-width="2"/><path d="M3 12l2-3 2 2z" fill="#333"/></svg>`)}</div>
          <div class="framed"><div class="line"><button class="add"><svg width="9" height="9" viewBox="0 0 9 9"><path d="M3 0h3v3h3v3H6v3H3V6H0V3h3z" fill="#fff"/></svg>动画</button><span class="search"><input aria-label="搜索动画" placeholder="搜索动画">${lens}</span></div></div>
        </div>
        <div class="dock">
          <div class="ptabs">
            ${this.panelTab("时间轴", html`<svg width="18" height="14" viewBox="0 0 18 14"><path d="M1 3l14-3 1 3L2 6z" fill="#dbe6f4"/><path d="M2 6h14v7H4z" fill="#a9bddc"/><path d="M4 3l2 2M8 2l2 2M12 1l2 2M4 9h10" stroke="#33415f" stroke-width="1.500"/></svg>`, true)}
            ${this.panelTab("编译器结果", html`<svg width="15" height="16" viewBox="0 0 15 16"><path d="M1 0h9l4 4v11H1z" fill="#c9d8f0"/><path d="M3 4l4 4-4 4M8 12.500h5" fill="none" stroke="#21365f" stroke-width="2"/></svg>`)}
          </div>
          <div class="framed results">
            <ul class="log"><li>Fast Template Successfully Created.</li><li>[7472.35] Compile of MainTitle successful! [in 455 ms] (/Game/All/MainTitle.MainTitle)</li></ul>
            <button class="clear">清除</button>
          </div>
        </div>
      </div>
    </div>`;
  }
}
